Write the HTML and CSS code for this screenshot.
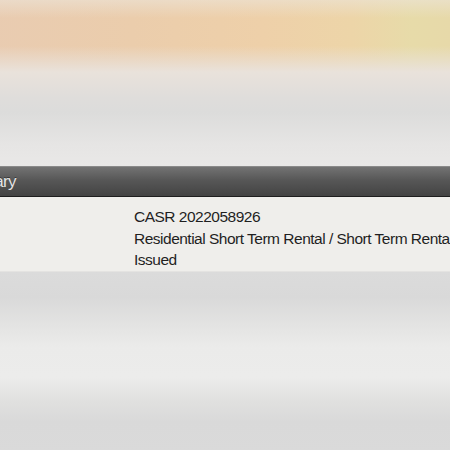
FILE: index.html
```html
<!DOCTYPE html>
<html>
<head>
<meta charset="utf-8">
<title>Permit Summary</title>
<link rel="stylesheet" href="styles.css">
</head>
<body>
<div class="screen">
  <div class="backdrop"></div>
  <div class="section">
    <div class="section-title">Summary</div>
    <div class="details">
      <div class="label"></div>
      <div class="values">
        <div class="value">CASR 2022058926</div>
        <div class="value">Residential Short Term Rental / Short Term Rental</div>
        <div class="value">Issued</div>
      </div>
    </div>
  </div>
  <div class="backdrop-lower"></div>
</div>
</body>
</html>
```

FILE: styles.css
```css
html, body {
	margin: 0;
	padding: 0;
	height: 100%;
	overflow: hidden;
	background: #e2e1e0;
}

body {
	font-family: "Liberation Sans", Arial, sans-serif;
}

.screen {
	display: flex;
	flex-direction: column;
	margin-left: -68px;
	width: 620px;
	height: 450px;
}

/* washed out page behind the sheet */
.backdrop {
	height: 166px;
	flex: none;
	background:
		linear-gradient(to bottom,
			rgba(236, 228, 216, 0.6) 0px,
			rgba(236, 228, 216, 0) 18px,
			rgba(236, 228, 216, 0) 46px,
			#e9e2db 72px,
			#dfdddb 98px,
			#dcdcdb 112px,
			#e6e5e4 145px,
			#e9e8e7 166px),
		linear-gradient(to right,
			#e8cbb3 0px,
			#ebcdac 200px,
			#eed0a9 330px,
			#edd5a8 420px,
			#e7dba9 480px,
			#e7d9a9 520px,
			#ebd4ae 540px);
}

.section {
	flex: none;
	white-space: nowrap;
}

.section-title {
	height: 29px;
	line-height: 30px;
	padding-left: 16px;
	font-size: 17px;
	letter-spacing: -0.7px;
	color: #e4e4e4;
	text-shadow: 0 -1px 0 rgba(0, 0, 0, 0.4);
	background: linear-gradient(to bottom, #737373 0%, #575757 45%, #434343 100%);
	border-top: 1px solid #8a8a8a;
	border-bottom: 1px solid #1e1e1e;
}

.details {
	display: grid;
	grid-template-columns: 202px 1fr;
	padding: 9px 0 0 0;
	background: #efeeeb;
	border-bottom: 1px solid #e4e3e1;
}

.value {
	font-size: 15.5px;
	line-height: 21.5px;
	letter-spacing: -0.5px;
	color: #1f1f1f;
}

.backdrop-lower {
	flex: 1;
	background: linear-gradient(to bottom,
		#dbdbdb 0px,
		#d9d9d9 25px,
		#e4e4e3 55px,
		#ebebea 75px,
		#ececeb 105px,
		#e0e0df 130px,
		#d9d9d9 150px,
		#dadada 180px);
}
```
